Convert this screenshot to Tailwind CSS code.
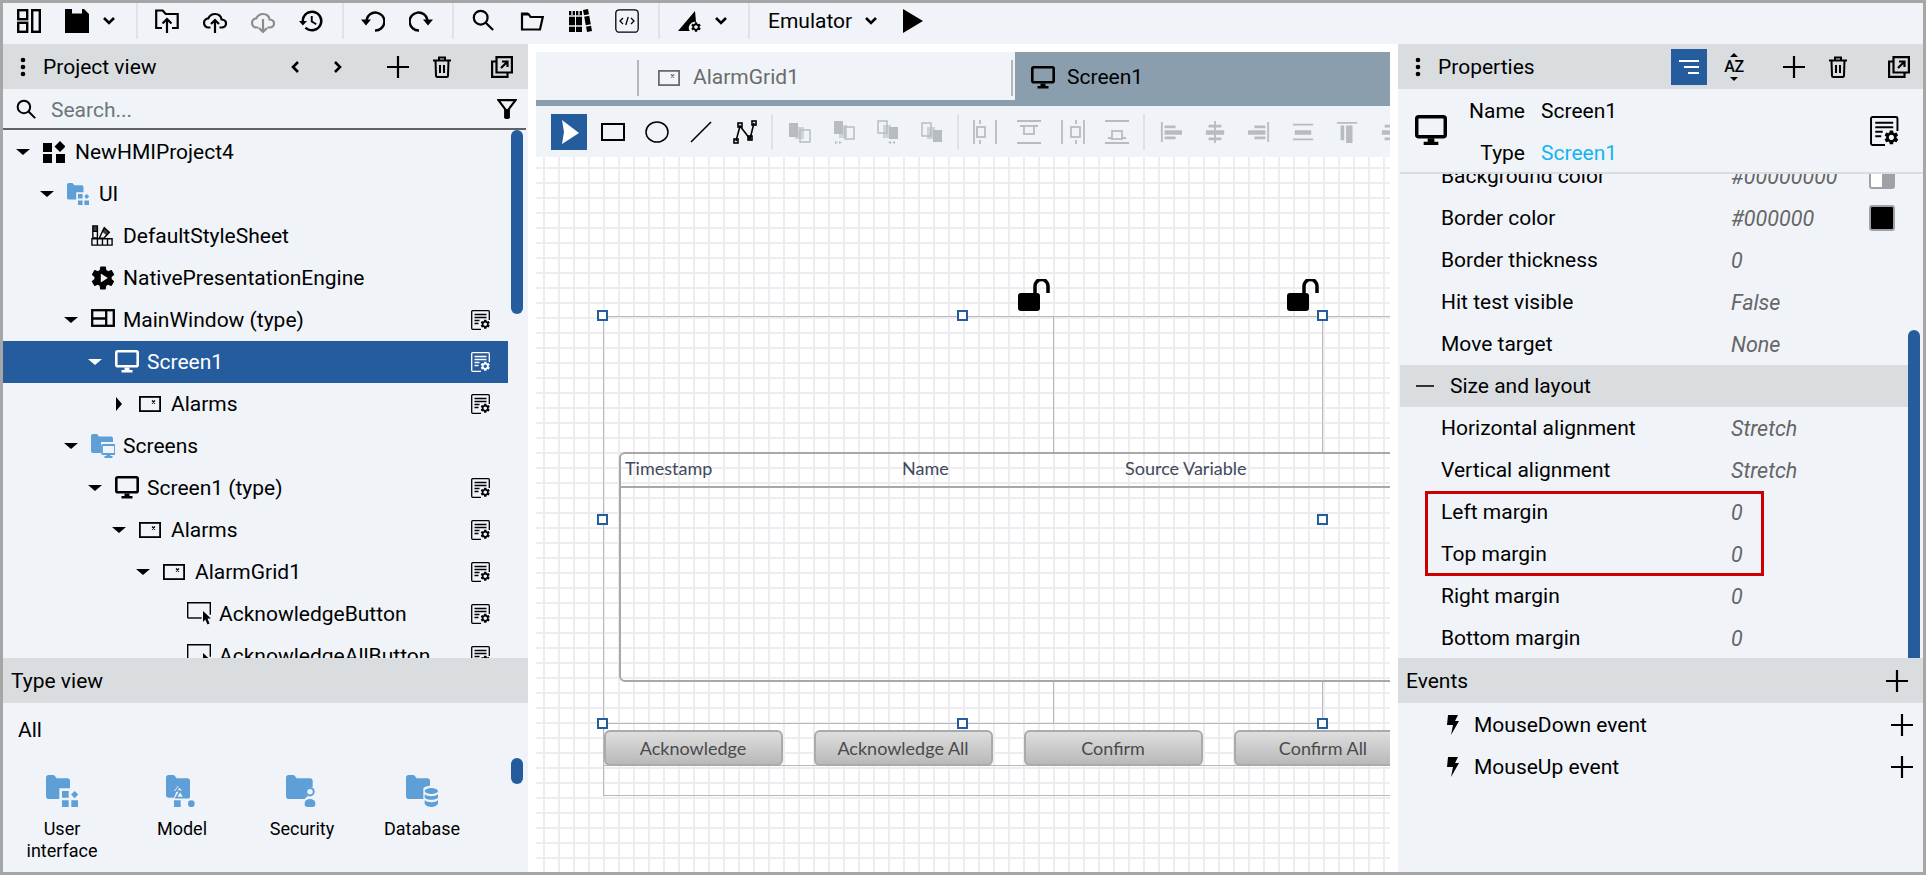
<!DOCTYPE html>
<html lang="en">
  <head>
    <meta charset="UTF-8" />
    <title>Optimus Plant HMI Studio</title>
    <script src="https://cdn.jsdelivr.net/npm/@tailwindcss/browser@4"></script>
  </head>
  <body class="font-['Roboto',sans-serif] text-[21px] text-black">
    <!-- Icon sheet -->
    <svg class="hidden">
      <symbol id="i-layout" viewBox="0 0 24 24"><g fill="none" stroke="currentColor" stroke-width="2.4"><rect x="1.2" y="1.2" width="9" height="9"/><rect x="1.2" y="13.8" width="9" height="9"/><rect x="15.2" y="1.2" width="7.6" height="21.6"/></g></symbol>
      <symbol id="i-save" viewBox="0 0 24 24"><path fill="currentColor" fill-rule="evenodd" d="M0 0h19l5 5v19H0zM7 0v4.500h10V0z"/></symbol>
      <symbol id="i-chev" viewBox="0 0 14 14"><path d="M2 4l5 5 5-5" fill="none" stroke="currentColor" stroke-width="2.6"/></symbol>
      <symbol id="i-open" viewBox="0 0 24 24"><g fill="none" stroke="currentColor" stroke-width="2.2"><path d="M7 19H1.2V1.5h6.5l3 3.5h12v14H17"/><path d="M12 24V10M7.500 14.500L12 10l4.500 4.500"/></g></symbol>
      <symbol id="i-cloud-up" viewBox="0 0 24 24"><g fill="none" stroke="currentColor" stroke-width="2.200"><path d="M7.500 18.500H5.500C3 18.500 1 16.500 1 14c0-2.500 2-4.500 4.400-4.700C6.500 6.800 9 5 12 5c3.400 0 6 2.400 6.600 5.500 2.500.2 4.400 1.800 4.400 4 0 2.300-1.900 4-4.500 4h-2"/><path d="M12 24V11M8 15l4-4 4 4"/></g></symbol>
      <symbol id="i-cloud-down" viewBox="0 0 24 24"><g fill="none" stroke="currentColor" stroke-width="2.200"><path d="M7.500 18.500H5.500C3 18.500 1 16.500 1 14c0-2.500 2-4.500 4.400-4.700C6.500 6.800 9 5 12 5c3.400 0 6 2.400 6.600 5.500 2.500.2 4.400 1.800 4.400 4 0 2.300-1.900 4-4.500 4h-2"/><path d="M12 10v13M8 19l4 4 4-4"/></g></symbol>
      <symbol id="i-history" viewBox="0 0 24 24"><path fill="currentColor" d="M13 1.500a10.500 10.500 0 0 0-10.500 10.500H0l3.900 4.500L8 12H5c0-4.400 3.600-8 8-8s8 3.600 8 8-3.600 8-8 8c-2.200 0-4.200-.9-5.700-2.300l-1.700 1.700A10.500 10.500 0 1 0 13 1.500zM11.800 7v6l5 3 .9-1.500-4-2.400V7z"/></symbol>
      <symbol id="i-undo" viewBox="0 0 24 24"><path d="M5.500 11A9 9 0 1 1 14 21.500" fill="none" stroke="currentColor" stroke-width="2.400"/><path fill="currentColor" d="M0 10.500h10L5 16.500z"/></symbol>
      <symbol id="i-redo" viewBox="0 0 24 24"><path d="M18.500 11A9 9 0 1 0 10 21.500" fill="none" stroke="currentColor" stroke-width="2.400"/><path fill="currentColor" d="M24 10.500H14l5 6z"/></symbol>
      <symbol id="i-search" viewBox="0 0 24 24"><g fill="none" stroke="currentColor" stroke-width="2.400"><circle cx="9.500" cy="9.500" r="7.500"/><path d="M15 15l8 8"/></g></symbol>
      <symbol id="i-folder" viewBox="0 0 24 24"><path fill="currentColor" d="M1 3.500h7l2 3H3v5l-2 8z"/><path d="M2 20.500V5h6.500l2 3h12.300L20 20.500z" fill="none" stroke="currentColor" stroke-width="2.200"/></symbol>
      <symbol id="i-books" viewBox="0 0 24 24"><path fill="currentColor" d="M1 2h6v21H1zM8 2h6v21H8zM15 1l5-1 4 22-5 1z"/><path stroke="#f0f4f8" stroke-width="1.300" d="M1 7h13M1 17h13M15.500 7l6-1M17.500 17l5.500-1M4 2v4M11 2v4"/></symbol>
      <symbol id="i-code" viewBox="0 0 24 24"><rect x=".8" y=".8" width="22.400" height="22.400" rx="3.500" fill="none" stroke="currentColor" stroke-width="1.300"/><path d="M8 9l-3 3 3 3M16 9l3 3-3 3M13.200 8l-2.400 8" fill="none" stroke="currentColor" stroke-width="1.300"/></symbol>
      <symbol id="i-theme" viewBox="0 0 24 24"><path fill="currentColor" d="M0 22L17 2l1 11a6 6 0 0 0-6.300 9z"/><path fill="currentColor" transform="translate(12 12) scale(.5)" d="M19.140 12.940c.04-.3.06-.61.06-.94 0-.32-.02-.64-.07-.94l2.030-1.580a.49.49 0 0 0 .12-.61l-1.920-3.320a.488.488 0 0 0-.59-.22l-2.390.96c-.5-.38-1.030-.7-1.620-.94l-.36-2.540a.484.484 0 0 0-.48-.41h-3.840c-.24 0-.43.17-.47.41l-.36 2.540c-.59.24-1.130.57-1.620.94l-2.390-.96c-.22-.08-.47 0-.59.22L2.740 8.870c-.12.21-.08.47.12.61l2.030 1.580c-.05.3-.09.63-.09.94s.02.64.07.94l-2.030 1.580a.49.49 0 0 0-.12.61l1.920 3.320c.12.22.37.29.59.22l2.390-.96c.5.38 1.030.7 1.620.94l.36 2.540c.05.24.24.41.48.41h3.840c.24 0 .44-.17.47-.41l.36-2.540c.59-.24 1.130-.56 1.620-.94l2.390.96c.22.08.47 0 .59-.22l1.920-3.320c.12-.22.07-.47-.12-.61l-2.010-1.580zM12 15.600c-1.980 0-3.600-1.620-3.600-3.600s1.620-3.600 3.600-3.600 3.600 1.620 3.600 3.600-1.620 3.600-3.600 3.600z"/></symbol>
      <symbol id="i-play" viewBox="0 0 20 24"><path fill="currentColor" d="M0 0l20 12L0 24z"/></symbol>
      <symbol id="i-dots" viewBox="0 0 6 20"><g fill="currentColor"><circle cx="3" cy="3" r="2.300"/><circle cx="3" cy="10" r="2.300"/><circle cx="3" cy="17" r="2.300"/></g></symbol>
      <symbol id="i-plus" viewBox="0 0 22 22"><path d="M11 0v22M0 11h22" stroke="currentColor" stroke-width="2.200"/></symbol>
      <symbol id="i-trash" viewBox="0 0 18 22"><g fill="none" stroke="currentColor" stroke-width="2"><path d="M0 4.500h18M6 4.500V1.500h6v3M2.500 4.500l.5 15a1.500 1.500 0 0 0 1.500 1.500h9a1.500 1.500 0 0 0 1.500-1.500l.5-15M7 9v8M11 9v8"/></g></symbol>
      <symbol id="i-popout" viewBox="0 0 22 22"><g fill="none" stroke="currentColor" stroke-width="2.200"><path d="M5.500 1.100h15.400v15.400H5.500z"/><path d="M5 5.500H1.100v15.400h15.400V17"/><path d="M10 12l6-6M11 5.500h5.500V11"/></g></symbol>
      <symbol id="i-funnel" viewBox="0 0 22 22"><path d="M1.500 1.200h19L13 11v9h-4v-9z" fill="none" stroke="currentColor" stroke-width="2.400"/><path fill="currentColor" d="M9 11h4v11H9z"/></symbol>
      <symbol id="i-project" viewBox="0 0 22 22"><path fill="currentColor" d="M0 2h9v9H0zM0 13h9v9H0zM13 13h9v9h-9zM17 0l5.500 5.500-5.500 5.500-5.500-5.500z"/></symbol>
      <symbol id="i-fold-ui" viewBox="0 0 24 24"><path fill="currentColor" d="M0 2a2 2 0 0 1 2-2h4l2 2.500h8a2 2 0 0 1 2 2V10h-8v8H2a2 2 0 0 1-2-2z"/><path fill="currentColor" d="M12 12h5v5h-5zM12 19h5v5h-5zM19 19h5v5h-5zM21.500 12l2.700 2.700-2.700 2.700-2.700-2.700z"/></symbol>
      <symbol id="i-fold-screens" viewBox="0 0 24 24"><path fill="currentColor" d="M0 2a2 2 0 0 1 2-2h4l2 2.500h12a2 2 0 0 1 2 2V8H10v11H2a2 2 0 0 1-2-2z"/><rect x="11" y="11" width="13" height="9" rx="1" fill="none" stroke="currentColor" stroke-width="1.800"/><path fill="currentColor" d="M15.500 20h4v2h2v2h-8v-2h2z"/></symbol>
      <symbol id="i-sheet" viewBox="0 0 24 24"><g fill="none" stroke="currentColor" stroke-width="1.500"><path d="M2 1h5v6H2zM2 7h5v7H2z"/><path d="M1 15h22v7H1zM7 15v7M12.500 15v7M18 15v7"/><path d="M14.500 3l5.500 5-6 6.500H9z"/></g><path fill="currentColor" d="M14.500 3l5.500 5-3 3.500-5.500-5zM2 1h5v6H2z" opacity=".75"/></symbol>
      <symbol id="i-engine" viewBox="0 0 24 24"><path fill="currentColor" fill-rule="evenodd" d="M19.800 13.100c.1-.4.1-.7.1-1.100s0-.8-.1-1.100l2.400-1.900c.2-.2.300-.5.100-.7l-2.300-4c-.1-.2-.4-.3-.7-.2l-2.900 1.100c-.6-.4-1.200-.8-1.900-1.100L14.100 1c0-.3-.3-.5-.6-.5H9c-.3 0-.5.2-.6.500l-.4 3.100c-.7.3-1.300.7-1.900 1.100L3.200 4.100c-.3-.1-.6 0-.7.200l-2.300 4c-.2.200-.1.500.1.700l2.400 1.900c0 .4-.1.700-.1 1.100s0 .8.1 1.100L.2 15c-.2.200-.3.500-.1.700l2.300 4c.1.200.4.300.7.200l2.900-1.100c.6.400 1.200.8 1.900 1.100l.4 3.100c.1.300.3.500.6.500h4.500c.3 0 .6-.2.600-.5l.4-3.100c.7-.3 1.300-.7 1.900-1.100l2.900 1.100c.3.100.6 0 .7-.2l2.300-4c.2-.2.100-.5-.1-.7zM9 7.500l7 4.500-7 4.500z" transform="translate(.8 0)"/></symbol>
      <symbol id="i-window" viewBox="0 0 24 24"><g fill="none" stroke="currentColor" stroke-width="2.300"><rect x="1.200" y="2.200" width="21.600" height="15.600"/><path d="M1.200 10.500h14M15.200 2.200v15.600"/></g></symbol>
      <symbol id="i-monitor" viewBox="0 0 24 24"><rect x="1.300" y="1.300" width="21.400" height="15" rx="1.500" fill="none" stroke="currentColor" stroke-width="2.600"/><path fill="currentColor" d="M9.500 17.500h5v2.500h3v2.500h-11V20h3z"/></symbol>
      <symbol id="i-control" viewBox="0 0 22 22"><rect x=".9" y="3.900" width="20.200" height="14.200" fill="none" stroke="currentColor" stroke-width="1.800"/><path d="M13 7.500l3 3M16 7.500l-3 3" stroke="currentColor" stroke-width="1.300"/></symbol>
      <symbol id="i-button" viewBox="0 0 24 24"><path d="M.7 16V.7h22.600v12" fill="none" stroke="currentColor" stroke-width="1.400"/><path d="M.7 16h14" fill="none" stroke="currentColor" stroke-width="1.400"/><path fill="currentColor" d="M16 9l8 7.500h-3.500l2 5-2 1-2.200-5-2.300 2.500z"/></symbol>
      <symbol id="i-props" viewBox="0 0 20 20"><g fill="none" stroke="currentColor" stroke-width="1.300"><path d="M10 19.300H1.700a1 1 0 0 1-1-1V1.700a1 1 0 0 1 1-1h15.600a1 1 0 0 1 1 1V10"/><path d="M3.500 4.500h12M3.500 7.500h12M3.500 10.500h5M3.500 13.500h4"/></g><path fill="currentColor" transform="translate(8.500 8.500) scale(.48)" d="M19.140 12.940c.04-.3.06-.61.06-.94 0-.32-.02-.64-.07-.94l2.030-1.580a.49.49 0 0 0 .12-.61l-1.920-3.320a.488.488 0 0 0-.59-.22l-2.390.96c-.5-.38-1.030-.7-1.620-.94l-.36-2.540a.484.484 0 0 0-.48-.41h-3.840c-.24 0-.43.17-.47.41l-.36 2.540c-.59.24-1.130.57-1.620.94l-2.390-.96c-.22-.08-.47 0-.59.22L2.740 8.870c-.12.21-.08.47.12.61l2.030 1.580c-.05.3-.09.63-.09.94s.02.64.07.94l-2.030 1.580a.49.49 0 0 0-.12.61l1.920 3.320c.12.22.37.29.59.22l2.390-.96c.5.38 1.030.7 1.620.94l.36 2.540c.05.24.24.41.48.41h3.840c.24 0 .44-.17.47-.41l.36-2.540c.59-.24 1.130-.56 1.620-.94l2.390.96c.22.08.47 0 .59-.22l1.920-3.320c.12-.22.07-.47-.12-.61l-2.010-1.580zM12 15.600c-1.980 0-3.600-1.620-3.600-3.600s1.620-3.600 3.600-3.600 3.600 1.620 3.600 3.600-1.620 3.600-3.600 3.600z"/></symbol>
      <symbol id="i-bolt" viewBox="0 0 12 20"><path fill="currentColor" d="M1 0h10L8 6h4L4 20l2-10H0z"/></symbol>
      <symbol id="i-lock" viewBox="0 0 32 32"><rect x="0" y="14" width="22" height="18" rx="3" fill="currentColor"/><path d="M17 15V7a6.500 6.500 0 0 1 13 0v7" fill="none" stroke="currentColor" stroke-width="3.500"/></symbol>
      <symbol id="i-sort" viewBox="0 0 24 24"><path stroke="currentColor" stroke-width="2" d="M2 6h20M7 12h15M11 18h11"/></symbol>
      <!-- drawing tools -->
      <symbol id="t-pointer" viewBox="0 0 24 24"><path fill="currentColor" d="M5 0l17 13L5 24l2-12z"/></symbol>
      <symbol id="t-rect" viewBox="0 0 24 24"><rect x="1" y="4" width="22" height="16" fill="none" stroke="currentColor" stroke-width="2"/></symbol>
      <symbol id="t-ellipse" viewBox="0 0 24 24"><ellipse cx="12" cy="12" rx="11" ry="10" fill="none" stroke="currentColor" stroke-width="1.500"/></symbol>
      <symbol id="t-line" viewBox="0 0 24 24"><path d="M2 22L22 2" stroke="currentColor" stroke-width="1.600"/></symbol>
      <symbol id="t-poly" viewBox="0 0 24 24"><g fill="none" stroke="currentColor" stroke-width="1.600"><path d="M3 21L7 6l10 13 4-16"/><rect x="1" y="19" width="4" height="4"/><rect x="5" y="3" width="4" height="4"/><rect x="15" y="16" width="4" height="4"/><rect x="19" y="1" width="4" height="4"/></g></symbol>
      <symbol id="t-front" viewBox="0 0 24 24"><g fill="currentColor"><path d="M1 3h9v14H1z"/><path d="M7 7h9v12H7z" opacity=".6"/></g><rect x="12" y="10" width="10" height="12" fill="none" stroke="currentColor" stroke-width="1.500"/></symbol>
      <symbol id="t-fwd" viewBox="0 0 24 24"><g fill="currentColor"><path d="M2 1h9v13H2z"/><path d="M7 5h8v13H7z" opacity=".6"/></g><rect x="13" y="7" width="9" height="12" fill="none" stroke="currentColor" stroke-width="1.500"/><path fill="currentColor" d="M3 24v-3l3 1.500zM7 24v-3l3 1.500z"/></symbol>
      <symbol id="t-back" viewBox="0 0 24 24"><rect x="2" y="1" width="9" height="12" fill="none" stroke="currentColor" stroke-width="1.500"/><g fill="currentColor"><path d="M7 5h8v13H7z" opacity=".6"/><path d="M13 7h9v12h-9z"/><path d="M15 24v-3l-3 1.500zM19 24v-3l-3 1.500z"/></g></symbol>
      <symbol id="t-last" viewBox="0 0 24 24"><rect x="2" y="3" width="9" height="13" fill="none" stroke="currentColor" stroke-width="1.500"/><g fill="currentColor"><path d="M7 7h8v12H7z" opacity=".6"/><path d="M13 10h9v12h-9z"/></g></symbol>
      <symbol id="t-dist-h" viewBox="0 0 24 24"><g fill="none" stroke="currentColor" stroke-width="1.800"><path d="M1 0v24M23 0v24M7 0v4M7 20v4"/><rect x="4" y="7" width="8" height="10"/></g></symbol>
      <symbol id="t-dist-v" viewBox="0 0 24 24"><g fill="none" stroke="currentColor" stroke-width="1.800"><path d="M0 1h24M0 23h24M3 6h4M17 6h4"/><rect x="7" y="6" width="10" height="8"/></g></symbol>
      <symbol id="t-dist-r" viewBox="0 0 24 24"><g fill="none" stroke="currentColor" stroke-width="1.800"><path d="M1 0v24M23 0v24M15 0v4M15 20v4"/><rect x="10" y="7" width="9" height="10"/></g></symbol>
      <symbol id="t-dist-b" viewBox="0 0 24 24"><g fill="none" stroke="currentColor" stroke-width="1.800"><path d="M0 1h24M0 23h24M3 18h4M17 18h4"/><rect x="7" y="11" width="10" height="8"/></g></symbol>
      <symbol id="t-al-l" viewBox="0 0 24 24"><path fill="currentColor" d="M1 1h2v22H1zM5 5h12v3H5zM5 10h19v5H5zM5 17h12v3H5z"/></symbol>
      <symbol id="t-al-c" viewBox="0 0 24 24"><path fill="currentColor" d="M11 0h2v24h-2zM5 4h14v3H5zM2 10h20v5H2zM5 18h14v3H5z"/></symbol>
      <symbol id="t-al-r" viewBox="0 0 24 24"><path fill="currentColor" d="M21 1h2v22h-2zM7 5h12v3H7zM0 10h19v5H0zM7 17h12v3H7z"/></symbol>
      <symbol id="t-al-m" viewBox="0 0 24 24"><path fill="currentColor" d="M1 3h22v2H1zM3 10h18v5H3zM1 19h22v2H1z"/></symbol>
      <symbol id="t-al-t" viewBox="0 0 24 24"><path fill="currentColor" d="M1 1h22v2H1zM5 5h4v16H5zM11 5h7v19h-7z"/></symbol>
    </svg>

    <div class="flex h-[875px] w-[1926px] flex-col overflow-hidden border-[3px] border-[#a6a6a6] bg-white">
      <!-- Main toolbar -->
      <header class="flex h-[41px] shrink-0 items-start bg-[#f0f4f8] pt-[6px]">
        <svg class="ml-[14px] size-6"><use href="#i-layout" /></svg>
        <svg class="ml-6 size-6"><use href="#i-save" /></svg>
        <svg class="ml-[13px] mt-[5px] size-[14px]"><use href="#i-chev" /></svg>
        <span class="-mt-[6px] ml-5 h-9 w-0.5 bg-[#dfe3e6]"></span>
        <svg class="ml-[17px] size-6"><use href="#i-open" /></svg>
        <svg class="ml-6 size-6"><use href="#i-cloud-up" /></svg>
        <svg class="ml-6 size-6 text-[#8c8c8c]"><use href="#i-cloud-down" /></svg>
        <svg class="ml-6 size-6"><use href="#i-history" /></svg>
        <span class="-mt-[6px] ml-[19px] h-9 w-0.5 bg-[#dfe3e6]"></span>
        <svg class="ml-[17px] size-6"><use href="#i-undo" /></svg>
        <svg class="ml-6 size-6"><use href="#i-redo" /></svg>
        <span class="-mt-[6px] ml-[19px] h-9 w-0.5 bg-[#dfe3e6]"></span>
        <svg class="ml-[18px] size-[22px]"><use href="#i-search" /></svg>
        <svg class="ml-[26px] size-6"><use href="#i-folder" /></svg>
        <svg class="ml-6 size-6"><use href="#i-books" /></svg>
        <svg class="ml-[23px] size-6"><use href="#i-code" /></svg>
        <span class="-mt-[6px] ml-[19px] h-9 w-0.5 bg-[#dfe3e6]"></span>
        <svg class="ml-[18px] size-6"><use href="#i-theme" /></svg>
        <svg class="ml-3 mt-[5px] size-[14px]"><use href="#i-chev" /></svg>
        <span class="-mt-[6px] ml-5 h-9 w-0.5 bg-[#dfe3e6]"></span>
        <span class="ml-[18px] w-[83px] leading-6">Emulator</span>
        <svg class="ml-[13px] mt-[5px] size-[14px]"><use href="#i-chev" /></svg>
        <svg class="ml-[25px] h-6 w-5"><use href="#i-play" /></svg>
      </header>

      <main class="flex min-h-0 flex-1">
        <!-- Left column -->
        <aside class="flex w-[525px] shrink-0 flex-col bg-[#f0f4f8]">
          <div class="flex h-[45px] shrink-0 items-center bg-[#dadde0]">
            <svg class="ml-[17px] h-5 w-1.5"><use href="#i-dots" /></svg>
            <span class="ml-[17px] w-[245px] pt-[2px]">Project view</span>
            <svg class="size-[14px] rotate-90"><use href="#i-chev" /></svg>
            <svg class="ml-[29px] size-[14px] -rotate-90"><use href="#i-chev" /></svg>
            <svg class="ml-[42px] size-[22px]"><use href="#i-plus" /></svg>
            <svg class="ml-[24px] h-[22px] w-[18px]"><use href="#i-trash" /></svg>
            <svg class="ml-[40px] size-[22px]"><use href="#i-popout" /></svg>
          </div>
          <div class="mr-0.5 flex h-[41px] shrink-0 items-center border-b-2 border-[#5f6368] pl-[13px] pt-px">
            <svg class="size-5"><use href="#i-search" /></svg>
            <span class="ml-[15px] flex-1 pt-[3px] text-[#6c757d]">Search...</span>
            <svg class="mr-[9px] size-5"><use href="#i-funnel" /></svg>
          </div>

          <!-- Project tree -->
          <div class="relative min-h-0 flex-1 overflow-hidden pt-px [&_.flex-1]:pt-[2px]">
            <div class="w-[505px]">
              <div class="flex h-[42px] items-center pl-[8px]">
                <span class="flex w-6 justify-center"><span class="size-0 border-x-[7px] border-t-[6px] border-x-transparent border-t-black"></span></span>
                <span class="ml-2 w-[32px]"><svg class="size-[22px]"><use href="#i-project" /></svg></span>
                <span class="flex-1">NewHMIProject4</span>
              </div>
              <div class="flex h-[42px] items-center pl-[32px]">
                <span class="flex w-6 justify-center"><span class="size-0 border-x-[7px] border-t-[6px] border-x-transparent border-t-black"></span></span>
                <span class="ml-2 w-[32px] text-[#5e9fd8]"><svg class="size-[22px]"><use href="#i-fold-ui" /></svg></span>
                <span class="flex-1">UI</span>
              </div>
              <div class="flex h-[42px] items-center pl-[56px]">
                <span class="w-6"></span>
                <span class="ml-2 w-[32px]"><svg class="size-[22px]"><use href="#i-sheet" /></svg></span>
                <span class="flex-1">DefaultStyleSheet</span>
              </div>
              <div class="flex h-[42px] items-center pl-[56px]">
                <span class="w-6"></span>
                <span class="ml-2 w-[32px]"><svg class="size-6"><use href="#i-engine" /></svg></span>
                <span class="flex-1">NativePresentationEngine</span>
              </div>
              <div class="flex h-[42px] items-center pl-[56px] pr-[17px]">
                <span class="flex w-6 justify-center"><span class="size-0 border-x-[7px] border-t-[6px] border-x-transparent border-t-black"></span></span>
                <span class="ml-2 w-[32px]"><svg class="size-6"><use href="#i-window" /></svg></span>
                <span class="flex-1">MainWindow (type)</span>
                <svg class="size-5"><use href="#i-props" /></svg>
              </div>
              <div class="flex h-[42px] items-center bg-[#245c9e] pl-[80px] pr-[17px] text-white">
                <span class="flex w-6 justify-center"><span class="size-0 border-x-[7px] border-t-[6px] border-x-transparent border-t-white"></span></span>
                <span class="ml-2 w-[32px]"><svg class="size-6"><use href="#i-monitor" /></svg></span>
                <span class="flex-1">Screen1</span>
                <svg class="size-5"><use href="#i-props" /></svg>
              </div>
              <div class="flex h-[42px] items-center pl-[104px] pr-[17px]">
                <span class="flex w-6 justify-center"><span class="size-0 border-y-[7px] border-l-[6px] border-y-transparent border-l-black"></span></span>
                <span class="ml-2 w-[32px]"><svg class="size-[22px]"><use href="#i-control" /></svg></span>
                <span class="flex-1">Alarms</span>
                <svg class="size-5"><use href="#i-props" /></svg>
              </div>
              <div class="flex h-[42px] items-center pl-[56px]">
                <span class="flex w-6 justify-center"><span class="size-0 border-x-[7px] border-t-[6px] border-x-transparent border-t-black"></span></span>
                <span class="ml-2 w-[32px] text-[#5e9fd8]"><svg class="size-6"><use href="#i-fold-screens" /></svg></span>
                <span class="flex-1">Screens</span>
              </div>
              <div class="flex h-[42px] items-center pl-[80px] pr-[17px]">
                <span class="flex w-6 justify-center"><span class="size-0 border-x-[7px] border-t-[6px] border-x-transparent border-t-black"></span></span>
                <span class="ml-2 w-[32px]"><svg class="size-6"><use href="#i-monitor" /></svg></span>
                <span class="flex-1">Screen1 (type)</span>
                <svg class="size-5"><use href="#i-props" /></svg>
              </div>
              <div class="flex h-[42px] items-center pl-[104px] pr-[17px]">
                <span class="flex w-6 justify-center"><span class="size-0 border-x-[7px] border-t-[6px] border-x-transparent border-t-black"></span></span>
                <span class="ml-2 w-[32px]"><svg class="size-[22px]"><use href="#i-control" /></svg></span>
                <span class="flex-1">Alarms</span>
                <svg class="size-5"><use href="#i-props" /></svg>
              </div>
              <div class="flex h-[42px] items-center pl-[128px] pr-[17px]">
                <span class="flex w-6 justify-center"><span class="size-0 border-x-[7px] border-t-[6px] border-x-transparent border-t-black"></span></span>
                <span class="ml-2 w-[32px]"><svg class="size-[22px]"><use href="#i-control" /></svg></span>
                <span class="flex-1">AlarmGrid1</span>
                <svg class="size-5"><use href="#i-props" /></svg>
              </div>
              <div class="flex h-[42px] items-center pl-[152px] pr-[17px]">
                <span class="w-6"></span>
                <span class="ml-2 w-[32px]"><svg class="size-6"><use href="#i-button" /></svg></span>
                <span class="flex-1">AcknowledgeButton</span>
                <svg class="size-5"><use href="#i-props" /></svg>
              </div>
              <div class="flex h-[42px] items-center pl-[152px] pr-[17px]">
                <span class="w-6"></span>
                <span class="ml-2 w-[32px]"><svg class="size-6"><use href="#i-button" /></svg></span>
                <span class="flex-1">AcknowledgeAllButton</span>
                <svg class="size-5"><use href="#i-props" /></svg>
              </div>
            </div>
            <div class="absolute right-[5px] top-0 h-[184px] w-3 rounded-full bg-[#245c9e]"></div>
          </div>

          <!-- Type view -->
          <div class="flex h-[45px] shrink-0 items-center bg-[#dadde0] pl-2 pt-[2px]">Type view</div>
          <div class="relative h-[169px] shrink-0 pl-[15px] pt-[15px]">
            <div class="leading-6">All</div>
            <div class="-ml-4 mt-[33px] flex text-center text-[18px] leading-[22px]">
              <div class="flex w-[120px] flex-col items-center">
                <svg class="size-8 text-[#5e9fd8]"><use href="#i-fold-ui" /></svg>
                <span class="mt-[11px]">User<br />interface</span>
              </div>
              <div class="flex w-[120px] flex-col items-center">
                <svg class="size-8 text-[#5e9fd8]" viewBox="0 0 24 24"><path fill="currentColor" d="M0 2a2 2 0 0 1 2-2h4l2 2.500h8a2 2 0 0 1 2 2V17h-5l-3-5h2l-3-4-3 4h2l-2 5H2a2 2 0 0 1-2-2z"/><path d="M12 6l-4.500 6h3l-3 5h9l-3-5h3z" fill="none" stroke="currentColor" stroke-width="1.200"/><path fill="currentColor" d="M6 19h5v5H6zM19 19a2.500 2.500 0 1 1 0 5 2.500 2.500 0 0 1 0-5z"/></svg>
                <span class="mt-[11px]">Model</span>
              </div>
              <div class="flex w-[120px] flex-col items-center">
                <svg class="size-8 text-[#5e9fd8]" viewBox="0 0 24 24"><path fill="currentColor" d="M0 2a2 2 0 0 1 2-2h4l2 2.500h10a2 2 0 0 1 2 2V9h-2.500a4 4 0 0 0-1 7A6 6 0 0 0 14 18H2a2 2 0 0 1-2-2z"/><circle cx="18" cy="12.500" r="2.800" fill="none" stroke="currentColor" stroke-width="1.500"/><path fill="currentColor" d="M14 21a4 3 0 0 1 4-3 4 3 0 0 1 4 3v1a2 2 0 0 1-2 2h-4a2 2 0 0 1-2-2z"/></svg>
                <span class="mt-[11px]">Security</span>
              </div>
              <div class="flex w-[120px] flex-col items-center">
                <svg class="size-8 text-[#5e9fd8]" viewBox="0 0 24 24"><path fill="currentColor" d="M0 2a2 2 0 0 1 2-2h4l2 2.500h8a2 2 0 0 1 2 2V8a8 2.500 0 0 0-5 2v8H2a2 2 0 0 1-2-2z"/><path fill="currentColor" d="M14 12a5 2.200 0 1 1 10 0 5 2.200 0 0 1-10 0zM14 14.500c2 2 8 2 10 0V17c-2 2-8 2-10 0zM14 19c2 2 8 2 10 0v2.500c-2 3.300-8 3.300-10 0z"/></svg>
                <span class="mt-[11px]">Database</span>
              </div>
            </div>
            <div class="absolute right-[5px] top-[55px] h-[26px] w-3 rounded-full bg-[#245c9e]"></div>
          </div>
        </aside>

        <!-- Document area -->
        <section class="flex w-[870px] shrink-0 flex-col bg-white px-2 pt-2">
          <div class="flex h-12 shrink-0">
            <div class="flex w-[479px] items-center bg-[#f0f4f8] pt-1">
              <span class="ml-[101px] h-9 w-0.5 bg-[#b4b7ba]"></span>
              <svg class="ml-[19px] size-[22px] text-[#6b6b6b]"><use href="#i-control" /></svg>
              <span class="ml-[13px] flex-1 text-[#6b6b6b]">AlarmGrid1</span>
              <span class="mr-0.5 h-9 w-0.5 bg-[#b4b7ba]"></span>
            </div>
            <div class="flex flex-1 items-center bg-[#8a9eae] pt-1 pl-4">
              <svg class="size-6"><use href="#i-monitor" /></svg>
              <span class="ml-3">Screen1</span>
            </div>
          </div>
          <div class="h-1.5 shrink-0 bg-[#8a9eae]"></div>

          <!-- Drawing tools -->
          <div class="flex h-[51px] shrink-0 items-center overflow-hidden bg-[#f0f4f8] pl-[11px] text-[#b8bcc0]">
            <span class="flex w-11 shrink-0 justify-center text-white"><span class="flex size-9 items-center justify-center bg-[#245c9e]"><svg class="size-6"><use href="#t-pointer" /></svg></span></span>
            <span class="flex w-11 shrink-0 justify-center text-black"><svg class="size-6"><use href="#t-rect" /></svg></span>
            <span class="flex w-11 shrink-0 justify-center text-black"><svg class="size-6"><use href="#t-ellipse" /></svg></span>
            <span class="flex w-11 shrink-0 justify-center text-black"><svg class="size-6"><use href="#t-line" /></svg></span>
            <span class="flex w-11 shrink-0 justify-center text-black"><svg class="size-6"><use href="#t-poly" /></svg></span>
            <span class="ml-1 mr-[5px] h-9 w-0.5 shrink-0 bg-[#dfe3e6]"></span>
            <span class="flex w-11 shrink-0 justify-center"><svg class="size-6"><use href="#t-front" /></svg></span>
            <span class="flex w-11 shrink-0 justify-center"><svg class="size-6"><use href="#t-fwd" /></svg></span>
            <span class="flex w-11 shrink-0 justify-center"><svg class="size-6"><use href="#t-back" /></svg></span>
            <span class="flex w-11 shrink-0 justify-center"><svg class="size-6"><use href="#t-last" /></svg></span>
            <span class="ml-[3px] mr-1 h-9 w-0.5 shrink-0 bg-[#dfe3e6]"></span>
            <span class="flex w-11 shrink-0 justify-center"><svg class="size-6"><use href="#t-dist-h" /></svg></span>
            <span class="flex w-11 shrink-0 justify-center"><svg class="size-6"><use href="#t-dist-v" /></svg></span>
            <span class="flex w-11 shrink-0 justify-center"><svg class="size-6"><use href="#t-dist-r" /></svg></span>
            <span class="flex w-11 shrink-0 justify-center"><svg class="size-6"><use href="#t-dist-b" /></svg></span>
            <span class="mx-1 h-9 w-0.5 shrink-0 bg-[#dfe3e6]"></span>
            <span class="flex w-11 shrink-0 justify-center"><svg class="size-[22px]"><use href="#t-al-l" /></svg></span>
            <span class="flex w-11 shrink-0 justify-center"><svg class="size-[22px]"><use href="#t-al-c" /></svg></span>
            <span class="flex w-11 shrink-0 justify-center"><svg class="size-[22px]"><use href="#t-al-r" /></svg></span>
            <span class="flex w-11 shrink-0 justify-center"><svg class="size-[22px]"><use href="#t-al-m" /></svg></span>
            <span class="flex w-11 shrink-0 justify-center"><svg class="size-[22px]"><use href="#t-al-t" /></svg></span>
            <span class="flex w-11 shrink-0 justify-center"><svg class="size-[22px]"><use href="#t-al-c" /></svg></span>
          </div>

          <!-- Design canvas: items sit at their canvas coordinates -->
          <div class="relative min-h-0 flex-1 overflow-hidden bg-white bg-[linear-gradient(to_right,#eeecf0_2px,transparent_2px),linear-gradient(to_bottom,#eeecf0_2px,transparent_2px)] bg-[size:15px_15px] bg-[position:7px_10px] font-['Lato',sans-serif] text-[18px]">
            <div class="absolute left-[67px] top-[159px] h-[480px] w-[900px] border border-[#b8b8b8]"></div>
            <div class="absolute left-[517px] top-[159px] h-[136px] w-px bg-[#b8b8b8]"></div>
            <div class="absolute left-[786px] top-[159px] h-[136px] w-px bg-[#b8b8b8]"></div>
            <div class="absolute left-[517px] top-[525px] h-[41px] w-px bg-[#b8b8b8]"></div>
            <div class="absolute left-[786px] top-[525px] h-[41px] w-px bg-[#b8b8b8]"></div>
            <div class="absolute left-[67px] top-[566px] h-px w-[719px] bg-[#b8b8b8]"></div>
            <div class="absolute left-[67px] top-[608px] h-px w-[719px] bg-[#b8b8b8]"></div>

            <div class="absolute left-[83px] top-[295px] h-[230px] w-[1000px] rounded-l-md border-2 border-[#a8a8a8]">
              <div class="flex h-[34px] items-center border-b-2 border-[#a8a8a8] pb-[3px] pl-1 text-[#3f4a5a]">
                <span class="w-[277px]">Timestamp</span>
                <span class="w-[223px]">Name</span>
                <span>Source Variable</span>
              </div>
            </div>

            <div class="absolute left-[67.5px] top-[573px] flex gap-[31px] text-[#4a4a4a]">
              <span class="flex h-9 w-[179px] shrink-0 items-center justify-center rounded-md border-2 border-[#aaaaaa] bg-linear-to-b from-[#dedede] to-[#b9b9b9]">Acknowledge</span>
              <span class="flex h-9 w-[179px] shrink-0 items-center justify-center rounded-md border-2 border-[#aaaaaa] bg-linear-to-b from-[#dedede] to-[#b9b9b9]">Acknowledge All</span>
              <span class="flex h-9 w-[179px] shrink-0 items-center justify-center rounded-md border-2 border-[#aaaaaa] bg-linear-to-b from-[#dedede] to-[#b9b9b9]">Confirm</span>
              <span class="flex h-9 w-[179px] shrink-0 items-center justify-center rounded-md border-2 border-[#aaaaaa] bg-linear-to-b from-[#dedede] to-[#b9b9b9]">Confirm All</span>
            </div>

            <svg class="absolute left-[482px] top-[122px] size-8"><use href="#i-lock" /></svg>
            <svg class="absolute left-[751px] top-[122px] size-8"><use href="#i-lock" /></svg>

            <span class="absolute left-[61px] top-[153px] size-[11px] border-2 border-[#245c9e] bg-white"></span>
            <span class="absolute left-[421px] top-[153px] size-[11px] border-2 border-[#245c9e] bg-white"></span>
            <span class="absolute left-[781px] top-[153px] size-[11px] border-2 border-[#245c9e] bg-white"></span>
            <span class="absolute left-[61px] top-[357px] size-[11px] border-2 border-[#245c9e] bg-white"></span>
            <span class="absolute left-[781px] top-[357px] size-[11px] border-2 border-[#245c9e] bg-white"></span>
            <span class="absolute left-[61px] top-[561px] size-[11px] border-2 border-[#245c9e] bg-white"></span>
            <span class="absolute left-[421px] top-[561px] size-[11px] border-2 border-[#245c9e] bg-white"></span>
            <span class="absolute left-[781px] top-[561px] size-[11px] border-2 border-[#245c9e] bg-white"></span>
          </div>
        </section>

        <!-- Properties column -->
        <aside class="flex w-[525px] shrink-0 flex-col bg-[#f0f4f8]">
          <div class="flex h-[45px] shrink-0 items-center bg-[#dadde0]">
            <svg class="ml-[17px] h-5 w-1.5"><use href="#i-dots" /></svg>
            <span class="ml-[17px] w-[233px] pt-[2px]">Properties</span>
            <span class="flex size-9 items-center justify-center bg-[#245c9e] text-white"><svg class="size-6"><use href="#i-sort" /></svg></span>
            <span class="relative ml-[16px] flex h-7 w-[22px] items-center justify-center text-[16px] font-medium leading-none tracking-[-0.5px]">AZ<span class="absolute left-[7px] top-0 size-0 border-x-[4px] border-b-[4px] border-x-transparent border-b-black"></span><span class="absolute bottom-0 left-[7px] size-0 border-x-[4px] border-t-[4px] border-x-transparent border-t-black"></span></span>
            <svg class="ml-[38px] size-[22px]"><use href="#i-plus" /></svg>
            <svg class="ml-[24px] h-[22px] w-[18px]"><use href="#i-trash" /></svg>
            <svg class="ml-[41px] size-[22px]"><use href="#i-popout" /></svg>
          </div>

          <div class="flex h-[83px] shrink-0 items-center">
            <svg class="ml-[17px] size-8"><use href="#i-monitor" /></svg>
            <div class="grid flex-1 grid-cols-[74px_1fr] gap-x-4 pl-[4px] pt-[2px]">
              <span class="h-[42px] text-right leading-[42px]">Name</span><span class="h-[42px] leading-[42px]">Screen1</span>
              <span class="h-[42px] text-right leading-[42px]">Type</span><span class="h-[42px] leading-[42px] text-[#14b4f0]">Screen1</span>
            </div>
            <svg class="mr-[23px] size-[30px]"><use href="#i-props" /></svg>
          </div>
          <div class="ml-0.5 h-0.5 shrink-0 bg-[#dadde0]"></div>

          <!-- Property rows -->
          <div class="relative min-h-0 flex-1 overflow-hidden [&_i]:pt-[2px] [&_span]:pt-[2px]">
            <div class="-mt-[19px]">
              <div class="flex h-[42px] items-center pl-[43px]"><span class="w-[290px]">Background color</span><i class="w-[138px] text-[21.5px] text-[#666666]">#00000000</i><span class="size-[26px] rounded-[3px] border-2 border-[#9ea2a6] bg-[linear-gradient(to_right,#ffffff_50%,#9ea2a6_50%)]"></span></div>
              <div class="flex h-[42px] items-center pl-[43px]"><span class="w-[290px]">Border color</span><i class="w-[138px] text-[21.5px] text-[#666666]">#000000</i><span class="size-[26px] rounded-[3px] border-2 border-[#9ea2a6] bg-black"></span></div>
              <div class="flex h-[42px] items-center pl-[43px]"><span class="w-[290px]">Border thickness</span><i class="text-[21.5px] text-[#666666]">0</i></div>
              <div class="flex h-[42px] items-center pl-[43px]"><span class="w-[290px]">Hit test visible</span><i class="text-[21.5px] text-[#666666]">False</i></div>
              <div class="flex h-[42px] items-center pl-[43px]"><span class="w-[290px]">Move target</span><i class="text-[21.5px] text-[#666666]">None</i></div>
              <div class="ml-0.5 flex h-[42px] w-[508px] items-center bg-[#dadde0] pl-4">
                <span class="h-0.5 w-[18px] bg-[#333333]"></span>
                <span class="ml-4">Size and layout</span>
              </div>
              <div class="flex h-[42px] items-center pl-[43px]"><span class="w-[290px]">Horizontal alignment</span><i class="text-[21.5px] text-[#666666]">Stretch</i></div>
              <div class="flex h-[42px] items-center pl-[43px]"><span class="w-[290px]">Vertical alignment</span><i class="text-[21.5px] text-[#666666]">Stretch</i></div>
              <div class="relative">
                <div class="flex h-[42px] items-center pl-[43px]"><span class="w-[290px]">Left margin</span><i class="text-[21.5px] text-[#666666]">0</i></div>
                <div class="flex h-[42px] items-center pl-[43px]"><span class="w-[290px]">Top margin</span><i class="text-[21.5px] text-[#666666]">0</i></div>
                <div class="absolute left-[27px] top-0 h-[85px] w-[339px] border-[3px] border-[#cc0000]"></div>
              </div>
              <div class="flex h-[42px] items-center pl-[43px]"><span class="w-[290px]">Right margin</span><i class="text-[21.5px] text-[#666666]">0</i></div>
              <div class="flex h-[42px] items-center pl-[43px]"><span class="w-[290px]">Bottom margin</span><i class="text-[21.5px] text-[#666666]">0</i></div>
            </div>
            <div class="absolute right-[3px] top-[156px] h-[329px] w-3 rounded-t-full rounded-b-xl bg-[#245c9e]"></div>
          </div>

          <div class="flex h-[45px] shrink-0 items-center justify-between bg-[#dadde0] pl-2 pr-[15px]">
            <span class="pt-[2px]">Events</span>
            <svg class="size-[22px]"><use href="#i-plus" /></svg>
          </div>
          <div class="h-[169px] shrink-0 pt-px">
            <div class="flex h-[42px] items-center pl-[49px] pr-[10px]">
              <svg class="h-5 w-3"><use href="#i-bolt" /></svg>
              <span class="ml-[15px] flex-1 pt-[2px]">MouseDown event</span>
              <svg class="size-[22px]"><use href="#i-plus" /></svg>
            </div>
            <div class="flex h-[42px] items-center pl-[49px] pr-[10px]">
              <svg class="h-5 w-3"><use href="#i-bolt" /></svg>
              <span class="ml-[15px] flex-1 pt-[2px]">MouseUp event</span>
              <svg class="size-[22px]"><use href="#i-plus" /></svg>
            </div>
          </div>
        </aside>
      </main>
    </div>
  </body>
</html>
